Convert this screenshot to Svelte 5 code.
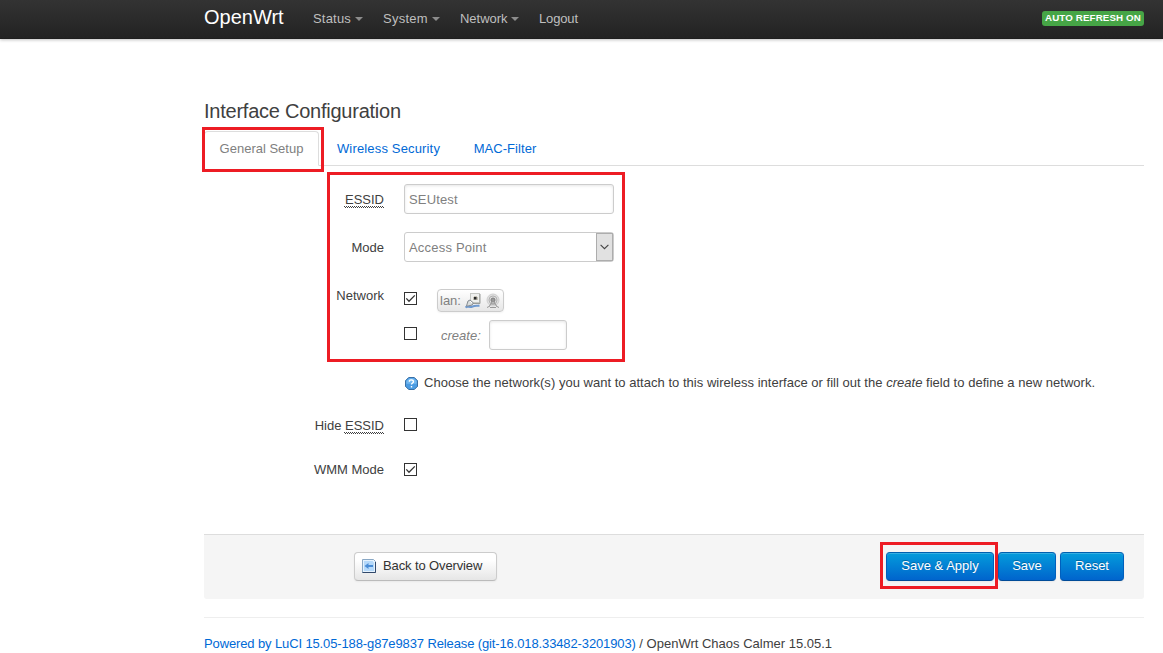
<script>
  const menu = [
    { label: 'Status', caret: true, width: 70, spacing: 0.2 },
    { label: 'System', caret: true, width: 77, spacing: 0.25 },
    { label: 'Network', caret: true, width: 79, spacing: -0.03 },
    { label: 'Logout', caret: false, width: 60, spacing: -0.15 }
  ];
  const tabs = [
    { label: 'General Setup', width: 115, spacing: 0 },
    { label: 'Wireless Security', width: 135, spacing: 0.16 },
    { label: 'MAC-Filter', width: 94, spacing: 0.05 }
  ];
  let active = $state(0);
</script>

{#snippet box(on)}
  <svg class="check" width="13" height="13" viewBox="0 0 13 13">
    <rect x=".5" y=".5" width="12" height="12" fill="#fff" stroke="#333" />
    {#if on}<path d="M2.3 6.4 5 9.2 10.8 3.4" fill="none" stroke="#333" stroke-width="1.3" />{/if}
  </svg>
{/snippet}

<header>
  <a class="brand" href="#top">OpenWrt</a>
  <nav>
    {#each menu as item}
      <a href="#menu" style:width="{item.width}px" style:letter-spacing="{item.spacing}px">{item.label}{#if item.caret}<i class="caret"></i>{/if}</a>
    {/each}
  </nav>
  <span class="refresh">Auto Refresh on</span>
</header>

<main>
  <h3>Interface Configuration</h3>
  <div class="tabs">
    {#each tabs as tab, i}
      <button class="tab" class:active={active === i} style:width="{tab.width}px" style:letter-spacing="{tab.spacing}px" onclick={() => (active = i)}>{tab.label}</button>
    {/each}
  </div>

  <form onsubmit={(e) => e.preventDefault()}>
    <div class="row essid">
      <div class="label"><abbr>ESSID</abbr></div>
      <input class="field" value="SEUtest" />
    </div>
    <div class="row mode">
      <div class="label">Mode</div>
      <div class="field select">
        <span>Access Point</span>
        <div class="arrow">
          <svg width="9" height="6" viewBox="0 0 9 6"><path d="M.6.8 4.5 4.7 8.4.8" fill="none" stroke="#444" stroke-width="1.1" /></svg>
        </div>
      </div>
    </div>
    <div class="row network">
      <div class="label">Network</div>
      <div class="options">
        <div class="option lan">
          {@render box(true)}
          <div class="iface">
            <span>lan:</span>
            <svg width="16" height="16" viewBox="0 0 16 16">
              <rect x="5.5" y=".5" width="9" height="9" fill="#eff0ee" stroke="#c5c7c3" />
              <path d="M6 10.500h9V1" fill="none" stroke="#999c99" />
              <path d="M8 4h1V3h3v1h1v3H8z" fill="#c4c1b4" />
              <rect x="9" y="4" width="2.500" height="2.500" fill="#292929" />
              <path d="M.5 14.500c2-2 4 .5 7-1s5-.5 7-1" fill="none" stroke="#6f9ad0" stroke-width="2" />
              <path d="m1.500 13 1.500-5 2-1 3.500 3-1.500 2-4 1z" fill="#d9dddd" stroke="#858b90" />
              <path d="m5 8 2 2" stroke="#fff" />
            </svg>
            <svg class="radio" width="16" height="16" viewBox="0 0 16 16" fill="none">
              <circle cx="8" cy="7" r="6" fill="#dedede" stroke="#cfcfcf" />
              <circle cx="8" cy="7" r="4" stroke="#b2b2b2" />
              <circle cx="8" cy="7" r="2" fill="#999" stroke="#7d7d7d" />
              <path d="m7.500 8-3 5m4-5 3 5M6 11h4M2 14.500l3-1.500m9 1.500L11 13M5 14.500h6" stroke="#999" />
            </svg>
          </div>
        </div>
        <div class="option create">
          {@render box(false)}
          <em>create:</em>
          <input class="small" aria-label="create" />
        </div>
        <div class="help">
          <svg width="13" height="13" viewBox="0 0 14 14">
            <path d="M4 .5h6L13.500 4v6L10 13.500H4L.5 10V4z" fill="#4a9be2" stroke="#2c639c" />
            <path d="M4.300 1.500h5.400l2.800 2.900v3H1.500v-3z" fill="#72b7ef" />
            <path d="M4.800 5V4c1-1.500 4.500-1 4.300 1.100C9 6.500 7 6.400 7 8.200M7 9.700v1.500" fill="none" stroke="#fff" stroke-width="1.500" />
          </svg>
          <span>Choose the network(s) you want to attach to this wireless interface or fill out the <em>create</em> field to define a new network.</span>
        </div>
      </div>
    </div>
    <div class="row hide">
      <div class="label">Hide <abbr>ESSID</abbr></div>
      {@render box(false)}
    </div>
    <div class="row wmm">
      <div class="label">WMM Mode</div>
      {@render box(true)}
    </div>

    <div class="actions">
      <button class="btn back">
        <svg width="14" height="14" viewBox="0 0 14 14">
          <path d="M.5.500h11l2 2v11H.5z" fill="#e5f2fd" stroke="#89a8c5" />
          <path d="M.5 13.500h13V3" fill="none" stroke="#31486a" />
          <path d="M2 2h8.500L12 4v8H2z" fill="#b5d9fa" />
          <path d="m2.500 7 4-3v2H11v2H6.500v2z" fill="#4a8dd6" />
        </svg>
        Back to Overview
      </button>
      <button class="btn primary apply">Save &amp; Apply</button>
      <button class="btn primary save">Save</button>
      <button class="btn primary reset">Reset</button>
    </div>
  </form>

  <footer><a href="#luci">Powered by LuCI 15.05-188-g87e9837 Release (git-16.018.33482-3201903)</a> / OpenWrt Chaos Calmer 15.05.1</footer>
</main>

<div class="mark mark-tab"></div>
<div class="mark mark-form"></div>
<div class="mark mark-apply"></div>

<style>
  :global(body) {
    margin: 0;
    overflow: hidden;
    background: #fff;
    color: #404040;
    font: 13px/18px "Liberation Sans", Arial, sans-serif;
  }
  * { box-sizing: border-box; }
  svg { display: block; flex: none; }
  a { color: #0069d6; text-decoration: none; }
  button, input { font: inherit; letter-spacing: inherit; }
  header {
    display: flex;
    height: 39px;
    padding: 0 19px 0 204px;
    background: linear-gradient(#333, #222);
    box-shadow: 0 1px 3px rgba(0, 0, 0, .25), inset 0 -1px 0 rgba(0, 0, 0, .1);
  }
  .brand { width: 109px; color: #fff; font-size: 20px; line-height: 35px; white-space: nowrap; }
  nav { display: flex; flex: 1; }
  nav a { display: flex; align-items: flex-start; color: #bfbfbf; line-height: 37px; }
  .caret { border: 4px solid transparent; border-top-color: #8c8c8c; border-bottom: 0; margin: 17px 0 0 4px; }
  .refresh {
    align-self: flex-start;
    width: 102px;
    height: 15px;
    margin-top: 11px;
    border-radius: 3px;
    background: #46a546;
    color: #fff;
    font-size: 9.75px;
    font-weight: bold;
    line-height: 14px;
    letter-spacing: .12px;
    text-align: center;
    text-transform: uppercase;
    white-space: nowrap;
  }
  main { width: 940px; margin-left: 204px; padding-top: 54px; }
  h3 { margin: 0; height: 38px; font-size: 20px; font-weight: normal; line-height: 36px; letter-spacing: -.24px; }
  .tabs { display: flex; gap: 2px; height: 35px; border-bottom: 1px solid #ddd; }
  .tab {
    height: 35px;
    padding: 1px 0 0;
    border: 1px solid transparent;
    border-radius: 4px 4px 0 0;
    background: none;
    color: #0069d6;
    line-height: 32px;
    white-space: nowrap;
  }
  .tab.active { border-color: #ddd #ddd #fff; background: #fff; color: gray; }
  .row { display: flex; }
  .label { width: 180px; margin-right: 20px; padding-top: 1px; text-align: right; white-space: nowrap; }
  abbr { display: inline-block; height: 17px; border-bottom: 1px dotted #404040; text-decoration: underline dotted #404040 1px; text-underline-offset: 2px; }
  .essid { padding-top: 18px; height: 66px; }
  .essid .label, .mode .label { padding-top: 7px; }
  .field, .small {
    height: 30px;
    border: 1px solid #ccc;
    border-radius: 3px;
    background: #fff;
    box-shadow: inset 0 1px 3px rgba(0, 0, 0, .1);
    color: gray;
  }
  .field { width: 210px; padding: 0 4px; letter-spacing: .15px; }
  .mode { height: 48px; }
  .select { display: flex; justify-content: space-between; align-items: center; padding-right: 0; box-shadow: none; letter-spacing: .2px; }
  .select span { padding-top: 2px; }
  .arrow { display: flex; align-items: center; justify-content: center; width: 17px; height: 28px; border: 1px solid #adadad; background: #e1e1e1; }
  .network { height: 138px; padding-top: 6px; }
  .options { flex: 1; }
  .option { display: flex; align-items: flex-start; color: gray; }
  .lan { height: 34px; padding-top: 3px; }
  .lan .check { margin-top: 3px; }
  .iface {
    display: flex;
    align-items: center;
    width: 67px;
    height: 23px;
    margin-left: 20px;
    padding-left: 2px;
    border: 1px solid #ccc;
    border-radius: 4px;
    background: linear-gradient(#fff, #e6e6e6);
    box-shadow: 0 1px 2px rgba(0, 0, 0, .05);
  }
  .iface span { width: 25px; }
  .radio { margin-left: 4px; }
  .create { height: 30px; }
  .create .check { margin-top: 7px; }
  .create em { width: 48px; margin-left: 24px; line-height: 32px; }
  .small { width: 78px; padding: 0 4px; }
  .help { display: flex; align-items: center; gap: 6px; height: 18px; margin-top: 24px; padding-left: 1px; letter-spacing: .022px; white-space: nowrap; }
  .help svg { margin-top: 1px; }
  .hide, .wmm { align-items: flex-start; height: 44px; }
  .hide { margin-top: -2px; }
  .hide .check { margin-top: 2px; }
  .wmm .check { margin-top: 3px; }
  .actions {
    display: flex;
    height: 65px;
    margin-top: 30px;
    padding: 17px 20px 0 150px;
    border-top: 1px solid #ddd;
    border-radius: 0 0 3px 3px;
    background: #f5f5f5;
  }
  .btn {
    height: 29px;
    padding: 0 0 2px;
    border: 1px solid #ccc;
    border-bottom-color: #bbb;
    border-radius: 4px;
    background: linear-gradient(#fff, #fff 25%, #e6e6e6);
    box-shadow: inset 0 1px 0 rgba(255, 255, 255, .2), 0 1px 2px rgba(0, 0, 0, .05);
    color: #333;
    line-height: 18px;
    white-space: nowrap;
  }
  .back { display: flex; align-items: center; gap: 7px; width: 143px; padding: 0 0 2px 7px; letter-spacing: -.12px; }
  .back svg { margin-top: 1px; }
  .primary { border-color: #0060b0 #0060bd #004b98; background: linear-gradient(#049cdb, #0064cd); color: #fff; text-shadow: 0 -1px 0 rgba(0, 0, 0, .25); }
  .apply { width: 108px; margin-left: auto; }
  .save { width: 58px; margin-left: 4px; }
  .reset { width: 64px; margin-left: 4px; }
  footer { margin-top: 18px; padding-top: 17px; border-top: 1px solid #eee; white-space: nowrap; }
  footer a { letter-spacing: -.122px; }
  .mark { position: absolute; border: 3px solid #ed1c24; pointer-events: none; }
  .mark-tab { left: 202px; top: 127px; width: 122px; height: 45px; }
  .mark-form { left: 327px; top: 172px; width: 298px; height: 190px; }
  .mark-apply { left: 880px; top: 542px; width: 118px; height: 47px; }
</style>
